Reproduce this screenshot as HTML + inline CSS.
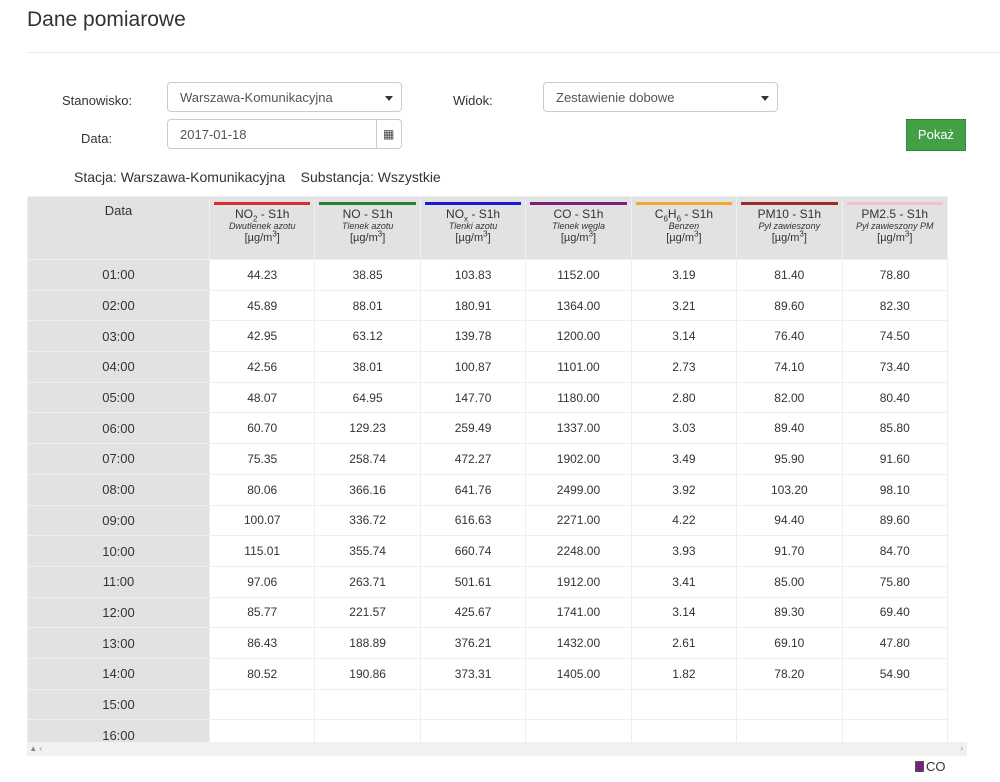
<!DOCTYPE html>
<html><head><meta charset="utf-8"><style>
body{margin:0;width:1000px;height:782px;background:#fff;font-family:"Liberation Sans",Arial,sans-serif;color:#333;position:relative;overflow:hidden}
.a{position:absolute}
h1{position:absolute;left:27px;top:8px;margin:0;font-size:21px;font-weight:normal;color:#333}
.sel{position:absolute;border:1px solid #ccc;border-radius:4px;height:30px;box-sizing:border-box;font-size:13px;color:#555;padding:7px 12px}
.car{position:absolute;right:8px;top:13px;width:0;height:0;border-left:4px solid transparent;border-right:4px solid transparent;border-top:5px solid #333}
.lbl{position:absolute;font-size:13px;color:#333}
table{position:absolute;left:27px;top:196px;border-collapse:collapse;table-layout:fixed;width:921px}
td,th{border:1px solid #eee;font-size:12px;text-align:center;padding:0;color:#333}
th{background:#e2e2e2;font-weight:normal;height:55px;vertical-align:top;position:relative;line-height:13px}
th .bar{display:block;height:3px;margin:5px 4px 3px}
th i{font-size:9px;display:block;line-height:11px}
th .u{font-size:11px;display:block;line-height:12px}
td{height:29.7px}
td.d{background:#e2e2e2;font-size:13px}
sub,sup{font-size:8px;line-height:0}
</style></head><body>
<h1>Dane pomiarowe</h1>
<div class="a" style="left:27px;top:52px;width:973px;height:1px;background:#eee"></div>
<div class="lbl" style="left:62px;top:93px">Stanowisko:</div>
<div class="lbl" style="left:81px;top:131px">Data:</div>
<div class="lbl" style="left:453px;top:93px">Widok:</div>
<div class="sel" style="left:167px;top:82px;width:235px">Warszawa-Komunikacyjna<span class="car"></span></div>
<div class="sel" style="left:167px;top:119px;width:235px;">2017-01-18</div>
<div class="a" style="left:376px;top:120px;width:1px;height:28px;background:#ccc"></div>
<div class="a" style="left:383px;top:127px;font-size:12px;color:#444">&#9638;</div>
<div class="sel" style="left:543px;top:82px;width:235px">Zestawienie dobowe<span class="car"></span></div>
<div class="a" style="left:906px;top:119px;width:60px;height:32px;background:#43a047;border:1px dotted #2e6b30;box-sizing:border-box;color:#fff;font-size:13px;text-align:center;line-height:30px">Pokaż</div>
<div class="a" style="left:74px;top:169px;font-size:14px;color:#333">Stacja: Warszawa-Komunikacyjna &nbsp;&nbsp; Substancja: Wszystkie</div>
<table>
<colgroup><col style="width:182px"><col><col><col><col><col><col><col></colgroup>
<tr><th style="padding-top:7px;font-size:13px">Data</th>
<th><span class="bar" style="background:#d32f2f"></span>NO<sub>2</sub> - S1h<i>Dwutlenek azotu</i><span class="u">[µg/m<sup>3</sup>]</span></th>
<th><span class="bar" style="background:#2e7d32"></span>NO - S1h<i>Tlenek azotu</i><span class="u">[µg/m<sup>3</sup>]</span></th>
<th><span class="bar" style="background:#1a1ad6"></span>NO<sub>x</sub> - S1h<i>Tlenki azotu</i><span class="u">[µg/m<sup>3</sup>]</span></th>
<th><span class="bar" style="background:#7b1f7f"></span>CO - S1h<i>Tlenek węgla</i><span class="u">[µg/m<sup>3</sup>]</span></th>
<th><span class="bar" style="background:#f0a830"></span>C<sub>6</sub>H<sub>6</sub> - S1h<i>Benzen</i><span class="u">[µg/m<sup>3</sup>]</span></th>
<th><span class="bar" style="background:#9b2d2d"></span>PM10 - S1h<i>Pył zawieszony</i><span class="u">[µg/m<sup>3</sup>]</span></th>
<th><span class="bar" style="background:#f4c2c8"></span>PM2.5 - S1h<i>Pył zawieszony PM</i><span class="u">[µg/m<sup>3</sup>]</span></th></tr>
<tr><td class="d">01:00</td><td>44.23</td><td>38.85</td><td>103.83</td><td>1152.00</td><td>3.19</td><td>81.40</td><td>78.80</td></tr>
<tr><td class="d">02:00</td><td>45.89</td><td>88.01</td><td>180.91</td><td>1364.00</td><td>3.21</td><td>89.60</td><td>82.30</td></tr>
<tr><td class="d">03:00</td><td>42.95</td><td>63.12</td><td>139.78</td><td>1200.00</td><td>3.14</td><td>76.40</td><td>74.50</td></tr>
<tr><td class="d">04:00</td><td>42.56</td><td>38.01</td><td>100.87</td><td>1101.00</td><td>2.73</td><td>74.10</td><td>73.40</td></tr>
<tr><td class="d">05:00</td><td>48.07</td><td>64.95</td><td>147.70</td><td>1180.00</td><td>2.80</td><td>82.00</td><td>80.40</td></tr>
<tr><td class="d">06:00</td><td>60.70</td><td>129.23</td><td>259.49</td><td>1337.00</td><td>3.03</td><td>89.40</td><td>85.80</td></tr>
<tr><td class="d">07:00</td><td>75.35</td><td>258.74</td><td>472.27</td><td>1902.00</td><td>3.49</td><td>95.90</td><td>91.60</td></tr>
<tr><td class="d">08:00</td><td>80.06</td><td>366.16</td><td>641.76</td><td>2499.00</td><td>3.92</td><td>103.20</td><td>98.10</td></tr>
<tr><td class="d">09:00</td><td>100.07</td><td>336.72</td><td>616.63</td><td>2271.00</td><td>4.22</td><td>94.40</td><td>89.60</td></tr>
<tr><td class="d">10:00</td><td>115.01</td><td>355.74</td><td>660.74</td><td>2248.00</td><td>3.93</td><td>91.70</td><td>84.70</td></tr>
<tr><td class="d">11:00</td><td>97.06</td><td>263.71</td><td>501.61</td><td>1912.00</td><td>3.41</td><td>85.00</td><td>75.80</td></tr>
<tr><td class="d">12:00</td><td>85.77</td><td>221.57</td><td>425.67</td><td>1741.00</td><td>3.14</td><td>89.30</td><td>69.40</td></tr>
<tr><td class="d">13:00</td><td>86.43</td><td>188.89</td><td>376.21</td><td>1432.00</td><td>2.61</td><td>69.10</td><td>47.80</td></tr>
<tr><td class="d">14:00</td><td>80.52</td><td>190.86</td><td>373.31</td><td>1405.00</td><td>1.82</td><td>78.20</td><td>54.90</td></tr>
<tr><td class="d">15:00</td><td></td><td></td><td></td><td></td><td></td><td></td><td></td></tr>
<tr><td class="d">16:00</td><td></td><td></td><td></td><td></td><td></td><td></td><td></td></tr>
</table>
<div class="a" style="left:27px;top:742px;width:940px;height:14px;background:#f1f1f1;font-size:8px;color:#888;line-height:14px">&nbsp;▲ ‹<span style="position:absolute;right:4px">›</span></div>
<div class="a" style="left:915px;top:761px;width:7px;height:9px;background:#7b1f7f;border:1px solid #555"></div>
<div class="a" style="left:926px;top:759px;font-size:13px;color:#333">CO</div>
</body></html>
